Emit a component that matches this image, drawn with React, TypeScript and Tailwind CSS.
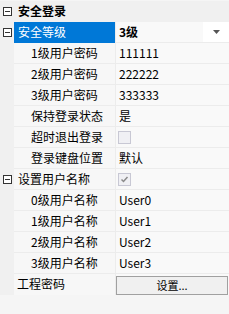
import React from 'react'

type Row = {
    label: string
    value?: React.ReactNode
    indent?: boolean
    category?: boolean
    expander?: boolean
    selected?: boolean
}

function MinusBox() {
    return (
        <span className="flex items-center justify-center h-[9px] w-[9px] border border-[#333] bg-white">
            <span className="block h-px w-[5px] bg-[#333]" />
        </span>
    )
}

function CheckBox({ checked }: { checked?: boolean }) {
    return (
        <span className="-ml-px flex items-center justify-center h-[13px] w-[13px] border border-[#c8c8d4] bg-[#f0f0f4]">
            {checked && (
                <svg width="9" height="9" viewBox="0 0 9 9">
                    <path d="M1.5 4.5 L3.5 6.5 L7.5 2" fill="none" stroke="#8a8a8a" strokeWidth="1.5" />
                </svg>
            )}
        </span>
    )
}

const rows: Row[] = [
    { label: '安全登录', category: true, expander: true },
    { label: '安全等级', value: <span className="font-bold">3级</span>, selected: true, expander: true },
    { label: '1级用户密码', value: '111111', indent: true },
    { label: '2级用户密码', value: '222222', indent: true },
    { label: '3级用户密码', value: '333333', indent: true },
    { label: '保持登录状态', value: '是', indent: true },
    { label: '超时退出登录', value: <CheckBox />, indent: true },
    { label: '登录键盘位置', value: '默认', indent: true },
    { label: '设置用户名称', value: <CheckBox checked />, expander: true },
    { label: '0级用户名称', value: 'User0', indent: true },
    { label: '1级用户名称', value: 'User1', indent: true },
    { label: '2级用户名称', value: 'User2', indent: true },
    { label: '3级用户名称', value: 'User3', indent: true },
]

export default function App() {
    return (
        <div
            className="w-[229px] h-[314px] bg-[#f5f5f5] text-[12px] leading-[20px] text-black overflow-hidden"
            style={{ fontFamily: '"Microsoft YaHei", "Noto Sans CJK SC", "Noto Sans", sans-serif' }}
        >
            <div className="pt-px">
                {rows.map((row) => {
                    if (row.category) {
                        return (
                            <div key={row.label} className="flex h-[21px] bg-[#f0f0f0] border-b border-[#f0f0f0]">
                                <div className="w-[14px] flex items-center justify-center pl-px">
                                    <MinusBox />
                                </div>
                                <span className="pl-[4px] font-bold">{row.label}</span>
                            </div>
                        )
                    }
                    return (
                        <div key={row.label} className="flex h-[21px]">
                            <div className="w-[14px] shrink-0 bg-[#f0f0f0] flex items-center justify-center pl-px">
                                {row.expander && <MinusBox />}
                            </div>
                            <div
                                className={`w-[101px] shrink-0 border-b ${row.selected ? 'bg-[#0078d7] text-white border-[#0078d7]' : 'bg-[#f7f7f7] border-[#ececec]'} ${row.indent ? 'pl-[17px]' : 'pl-[4px]'}`}
                            >
                                {row.label}
                            </div>
                            <div className="w-px shrink-0 bg-[#ececec]" />
                            <div className="flex-1 flex items-center bg-[#f9f9f9] border-b border-[#ececec] pl-[3px]">
                                <div className="flex-1">{row.value}</div>
                                {row.selected && (
                                    <div className="w-[26px] h-full bg-white flex items-center justify-center">
                                        <svg width="7" height="4" viewBox="0 0 7 4">
                                            <path d="M0 0 H7 L3.5 4 Z" fill="#555" />
                                        </svg>
                                    </div>
                                )}
                            </div>
                        </div>
                    )
                })}
                <div className="flex h-[21px]">
                    <div className="w-[14px] shrink-0 bg-[#f0f0f0]" />
                    <div className="w-[101px] shrink-0 bg-[#f7f7f7] pl-[3px]">工程密码</div>
                    <div className="w-px shrink-0 bg-[#ececec]" />
                    <div className="flex-1 bg-[#f9f9f9] py-px pr-px">
                        <button
                            type="button"
                            className="h-[19px] w-full border border-[#a0a0a0] bg-[#f0f0f0] text-[11px] leading-[17px] text-center"
                        >
                            设置...
                        </button>
                    </div>
                </div>
            </div>
        </div>
    )
}
